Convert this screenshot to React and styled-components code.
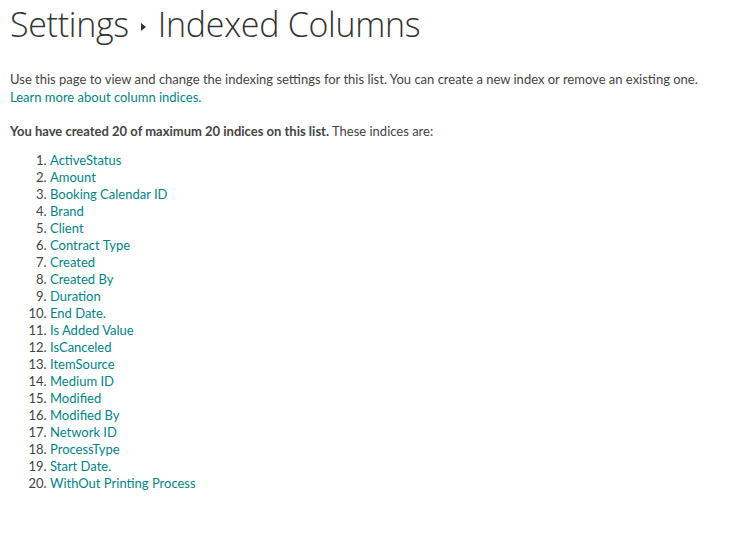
import React from "react";
import styled, { createGlobalStyle } from "styled-components";

const Global = createGlobalStyle`
  html, body { margin: 0; padding: 0; background: #fff; }
  body { font-family: "Lato", "Noto Sans", sans-serif; color: #444; }
`;

const Page = styled.div`
  padding: 0 10px;
`;

const Title = styled.h1`
  margin: 0;
  padding-top: 2px;
  font-family: "Open Sans", sans-serif;
  font-weight: 300;
  font-size: 34px;
  line-height: 44px;
  color: #333;
  display: flex;
  align-items: center;
  gap: 12px;
  letter-spacing: -0.3px;
`;

const Arrow = styled.span`
  display: inline-block;
  width: 0;
  height: 0;
  border-top: 4px solid transparent;
  border-bottom: 4px solid transparent;
  border-left: 5px solid #333;
  margin-top: 6px;
`;

const Intro = styled.p`
  margin: 24px 0 0;
  font-size: 13px;
  line-height: 18px;
`;

const Link = styled.a`
  color: #038387;
  text-decoration: none;
`;

const Summary = styled.p`
  margin: 16px 0 0;
  font-size: 13px;
  line-height: 18px;
`;

const List = styled.ol`
  margin: 12px 0 0;
  padding-left: 40px;
  font-size: 13px;
  line-height: 17px;
  li::marker { color: #444; }
`;

const items = [
  "ActiveStatus","Amount","Booking Calendar ID","Brand","Client","Contract Type","Created","Created By","Duration","End Date.","Is Added Value","IsCanceled","ItemSource","Medium ID","Modified","Modified By","Network ID","ProcessType","Start Date.","WithOut Printing Process",
];

export default function App() {
  return (
    <Page>
      <Global />
      <Title>
        <span>Settings</span>
        <Arrow />
        <span>Indexed Columns</span>
      </Title>
      <Intro>
        Use this page to view and change the indexing settings for this list. You can create a new index or remove an existing one.
        <br />
        <Link href="#">Learn more about column indices.</Link>
      </Intro>
      <Summary>
        <b>You have created 20 of maximum 20 indices on this list.</b> These indices are:
      </Summary>
      <List>
        {items.map((t) => (
          <li key={t}><Link href="#">{t}</Link></li>
        ))}
      </List>
    </Page>
  );
}
